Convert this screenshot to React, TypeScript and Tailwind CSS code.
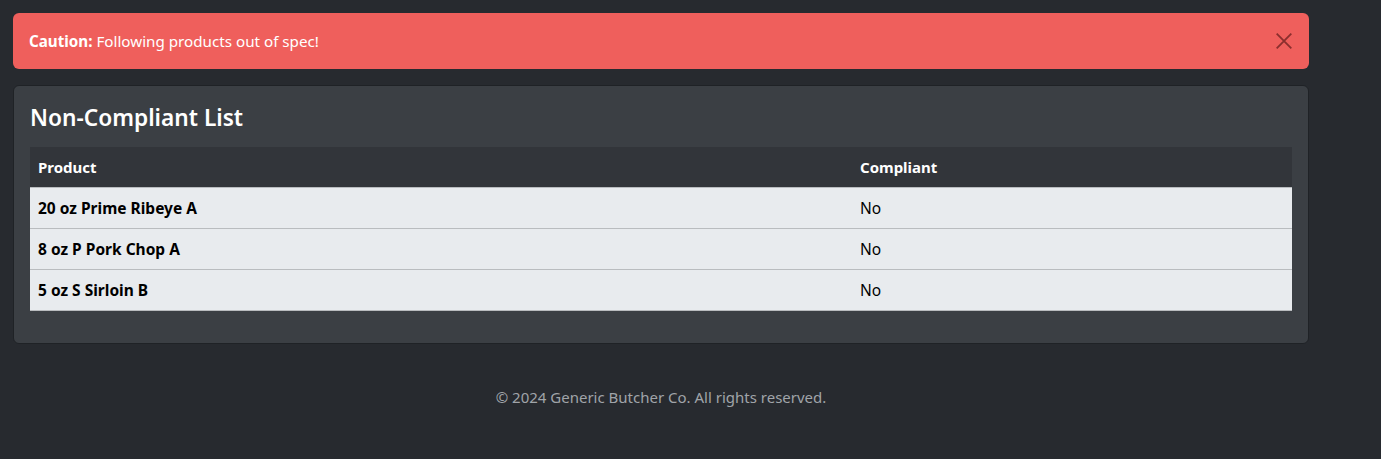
import React from 'react';

const rows = [
  { product: '20 oz Prime Ribeye A', compliant: 'No' },
  { product: '8 oz P Pork Chop A', compliant: 'No' },
  { product: '5 oz S Sirloin B', compliant: 'No' },
];

export default function App() {
  return (
    <div
      className="min-h-[459px] w-full bg-[#272a2f] pt-[13px]"
      style={{ fontFamily: '"Noto Sans", "Open Sans", sans-serif' }}
    >
      <div className="ml-[13px] w-[1296px]">
        {/* Alert */}
        <div className="flex h-[56px] items-center justify-between rounded-[6px] bg-[#ef5f5c] pl-[16px] pr-[13px] text-[15.2px] text-white">
          <div>
            <span className="font-bold">Caution:</span> Following products out of spec!
          </div>
          <button className="flex h-[24px] w-[24px] items-center justify-center text-[#8a2e2d]">
            <svg width="18" height="18" viewBox="0 0 16 16" fill="none" stroke="currentColor" strokeWidth="1.6">
              <path d="M1.5 1.5l13 13M14.5 1.5l-13 13" />
            </svg>
          </button>
        </div>

        {/* Card */}
        <div className="mt-[16px] rounded-[6px] border border-[#1f2226] bg-[#3b3f44] px-[16px] pb-[32px] pt-[16px]">
          <h2 className="mb-[13px] text-[22.7px] font-semibold leading-[32px] text-white">Non-Compliant List</h2>
          <table className="w-full border-collapse">
            <thead>
              <tr className="h-[40px] bg-[#32353a] text-[15px] text-white">
                <th className="w-[822px] px-[8px] text-left font-bold">Product</th>
                <th className="px-[8px] text-left font-bold">Compliant</th>
              </tr>
            </thead>
            <tbody>
              {rows.map((r) => (
                <tr key={r.product} className="h-[41px] border-t border-[#b9bcbf] bg-[#e8ebee] text-[15.5px] text-black">
                  <td className="px-[8px] pt-[3px] font-bold">{r.product}</td>
                  <td className="px-[8px] pt-[3px]">{r.compliant}</td>
                </tr>
              ))}
              <tr className="h-0 border-t border-[#b9bcbf]"><td colSpan={2} className="p-0" /></tr>
            </tbody>
          </table>
        </div>

        {/* Footer */}
        <footer className="pt-[42px] text-center text-[15px] text-[#a0a4a9]">
          © 2024 Generic Butcher Co. All rights reserved.
        </footer>
      </div>
    </div>
  );
}
